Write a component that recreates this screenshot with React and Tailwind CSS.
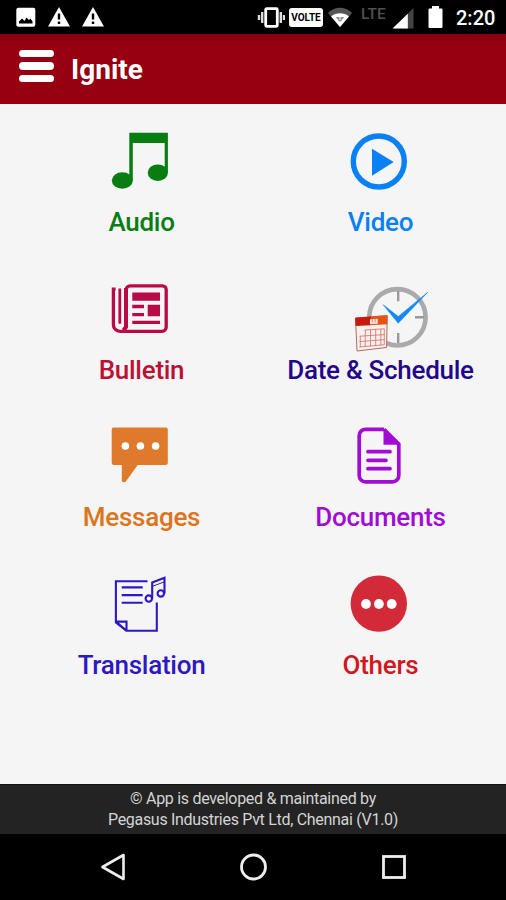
import React from 'react';

const AudioIcon = () => (
  <svg width="100" height="76" viewBox="0 0 100 76" fill="#087d12">
    <path d="M38.3 4.7h38.6V45h-3.2V15H41.8v38h-3.5z" />
    <ellipse cx="31.3" cy="52.5" rx="10.5" ry="8.2" />
    <ellipse cx="66.8" cy="44.7" rx="10.1" ry="8.3" />
  </svg>
);

const VideoIcon = () => (
  <svg width="100" height="76" viewBox="0 0 100 76">
    <circle cx="48.8" cy="33.5" r="25.5" fill="none" stroke="#0a80f5" strokeWidth="5.4" />
    <path d="M42 20.7 63.7 34 42 47.7z" fill="#0a80f5" />
  </svg>
);

const BulletinIcon = () => (
  <svg width="100" height="76" viewBox="0 0 100 76" fill="none" stroke="#b90a48">
    <path
      d="M35.3 49V13.5a3.7 3.7 0 0 1 3.7-3.7h32.5a3.7 3.7 0 0 1 3.7 3.7v37.8a4 4 0 0 1-4 4H29a6.6 6.6 0 0 1-6.6-6.6V13.2h2.2"
      strokeWidth="3.3"
    />
    <path d="M28.8 12.5v35.2" strokeWidth="2.8" />
    <path d="M25.5 47.5a3.3 3.4 0 0 0 6.6 0" stroke="#f5f5f5" strokeWidth="1.6" />
    <path d="M35 12v39l-2.5 3.3" strokeWidth="4" />
    <path
      d="M41.3 16.4H69v8.3H41.3zM41.3 28.8H53v3.4H41.3zM41.3 36.9H53v3.4H41.3zM56.7 28.8H69v11.5H56.7zM41.3 44.8H69V48H41.3z"
      fill="#b90a48"
      stroke="none"
    />
  </svg>
);

const ScheduleIcon = () => (
  <svg width="100" height="76" viewBox="0 0 100 76">
    <circle cx="67.4" cy="41.3" r="28.2" fill="none" stroke="#aaa" strokeWidth="4.6" />
    <path d="M68.2 15v10.3M85 41.3h9M68.2 57v10" stroke="#999" strokeWidth="2.4" />
    <path d="M53.2 28.8 68.3 40.5 97.7 16.3 68.2 47.2z" fill="#118af8" stroke="#118af8" strokeWidth=".6" />
    <path d="M25.5 42 57.2 39.6 56.6 71.5 27 75z" fill="#f8f0ef" stroke="#b66a60" strokeWidth="1" />
    <path d="M25.2 41.7 41 40.5v8.7l-15.3.9z" fill="#c9190c" />
    <path d="M41 40.5l16.4-1.2-.1 9L41 49.2z" fill="#e75310" />
    <path d="M40 43.3l7.7-.5v5L40 48.2z" fill="#f4e4df" />
    <path d="M42.3 43.2v3.3M45.2 43v3.3" stroke="#c67b65" strokeWidth=".8" />
    <path
      d="M34.5 54l20-1.2M29.5 60.2l25-1.6M29.3 65.6l25-1.9M29.5 71l24.8-2.3M35.3 54l-.1 17M40.5 53.5v17M45.7 53.3v16.8M50.8 53v16.5M54.3 52.8v16M30.3 60v11"
      stroke="#d67d6e"
      strokeWidth=".9"
      fill="none"
    />
  </svg>
);

const MessagesIcon = () => (
  <svg width="100" height="76" viewBox="0 0 100 76" fill="#df7a2c">
    <path d="M22.5 4.6H75a1.8 1.8 0 0 1 1.8 1.8v33.7a1.8 1.8 0 0 1-1.8 1.8H46.7L35 58.2c-1.3 1.8-4.2 1.4-4.2-.7V41.9h-8.3a1.8 1.8 0 0 1-1.8-1.8V6.4a1.8 1.8 0 0 1 1.8-1.8z" />
    <g fill="#fff">
      <circle cx="34.4" cy="23" r="3.8" />
      <circle cx="49.4" cy="23" r="3.8" />
      <circle cx="64.6" cy="23" r="3.8" />
    </g>
  </svg>
);

const DocumentsIcon = () => (
  <svg width="100" height="76" viewBox="0 0 100 76" fill="none" stroke="#a20bd3" strokeWidth="3.7">
    <path d="M54 6.3H35.5a6.3 6.3 0 0 0-6.3 6.3v39.9a6.3 6.3 0 0 0 6.3 6.3h27a6.3 6.3 0 0 0 6.3-6.3V21L54 6.3" strokeLinejoin="round" />
    <path d="M53.5 5.5l16.8 16.2H53.5z" fill="#a20bd3" stroke="none" />
    <path d="M38 28.7h22M38 37.3h18M38 45.7h22" strokeLinecap="round" />
  </svg>
);

const TranslationIcon = () => (
  <svg width="100" height="76" viewBox="0 0 100 76" fill="none" stroke="#2d18c4" strokeWidth="2.1">
    <path d="M56.5 10.2H24.9v41.4l10.6 8.2h30.3V31.6" />
    <path d="M24.9 50.6h10.6v9.2M24.9 50.6l10.6 9.2" />
    <path d="M30.7 16.4h21M30.7 24.1h21M30.7 31.7h21" />
    <circle cx="57.8" cy="27.6" r="3.2" />
    <circle cx="69.8" cy="22.4" r="3.2" />
    <path d="M61.2 27.5V11.4l12.3-4.6v15.7" />
    <path d="M61.2 15.4l12.3-4.6" strokeWidth="1" />
  </svg>
);

const OthersIcon = () => (
  <svg width="100" height="76" viewBox="0 0 100 76">
    <circle cx="48.8" cy="32.6" r="28.2" fill="#d32a3a" />
    <g fill="#fff">
      <circle cx="36" cy="33" r="4.9" />
      <circle cx="48.9" cy="33" r="4.9" />
      <circle cx="61.7" cy="33" r="4.9" />
    </g>
  </svg>
);

const WarningIcon = () => (
  <svg width="22" height="20" viewBox="0 0 22 20">
    <path d="M11 0l11 19.5H0z" fill="#fff" />
    <path d="M11 6.5v6M11 14.5v2.5" stroke="#000" strokeWidth="2.4" />
  </svg>
);

const menuItems = [
  { label: 'Audio', color: 'text-[#087d12]', Icon: AudioIcon },
  { label: 'Video', color: 'text-[#0a80f5]', Icon: VideoIcon },
  { label: 'Bulletin', color: 'text-[#bc1034]', Icon: BulletinIcon },
  { label: 'Date & Schedule', color: 'text-[#23068a]', Icon: ScheduleIcon },
  { label: 'Messages', color: 'text-[#dc7420]', Icon: MessagesIcon },
  { label: 'Documents', color: 'text-[#a20bd3]', Icon: DocumentsIcon },
  { label: 'Translation', color: 'text-[#2d18c4]', Icon: TranslationIcon },
  { label: 'Others', color: 'text-[#cf1820]', Icon: OthersIcon },
];

const StatusBar = () => (
  <div className="h-[34px] bg-black flex items-start justify-between pl-4 pr-[11px] pt-[7px]">
    <div className="flex">
      <svg width="20" height="20" viewBox="0 0 20 20">
        <rect x=".3" y=".7" width="19" height="19" rx="2" fill="#fff" />
        <path d="M3 16.5v-2l3-3 2.5 2.5 2-3.5 2.5 2.5 1.5-1.5 2 3v2z" fill="#000" />
      </svg>
      <div className="ml-3 flex gap-3">
        <WarningIcon />
        <WarningIcon />
      </div>
    </div>
    <div className="flex">
      <svg width="28" height="21" viewBox="0 0 28 21">
        <path d="M2 8v5M5.2 5v11M27 8v5M23.8 5v11" stroke="#ddd" strokeWidth="2.4" />
        <rect x="8.7" y="1.7" width="11.6" height="17.6" rx="1" fill="none" stroke="#fff" strokeWidth="2.8" />
      </svg>
      <div className="ml-[4px] mt-[1px] w-[34px] h-[19px] rounded-[3px] bg-white text-black text-[10px] leading-[19px] font-bold text-center">
        VOLTE
      </div>
      <svg className="ml-[5px]" width="24" height="21" viewBox="0 0 24 21">
        <path d="M0 6C7-1 17-1 24 6L12 20z" fill="#555" />
        <path d="M3 9.5c5-4.3 13-4.3 18 0L12 20z" fill="#fff" />
        <path d="M8 10.5h8L12 15z" fill="#222" />
        <path d="M12 9v6M8 12h8" stroke="#fff" strokeWidth="1" />
      </svg>
      <span className="ml-[9px] w-[26px] text-[#505050] text-[15.5px] leading-[14px] font-medium">LTE</span>
      <svg className="ml-[5px]" width="22" height="22" viewBox="0 0 22 22">
        <path d="M21.5 1v20.5H1z" fill="#444" />
        <path d="M15.8 6.7v14.8H.5z" fill="#fff" />
      </svg>
      <svg className="ml-[14px] -mt-[1px]" width="15" height="23" viewBox="0 0 15 23">
        <path d="M4 0h7v2.5h2.5q1 0 1 1V21q0 1-1 1h-12q-1 0-1-1V3.5q0-1 1-1H4z" fill="#fff" />
      </svg>
      <span className="ml-[13px] w-[39px] whitespace-nowrap text-white text-[20px] leading-[22px] font-medium">2:20</span>
    </div>
  </div>
);

const Header = () => (
  <header className="h-[70px] bg-[#970011] bg-linear-to-b from-[#86000d] via-[#970011] via-15% to-[#970011] flex items-start pl-[19px] pt-4">
    <button className="flex flex-col gap-[5px] w-[35px]" aria-label="Menu">
      <span className="h-[7.4px] w-full rounded-full bg-white"></span>
      <span className="h-[7.4px] w-full rounded-full bg-white"></span>
      <span className="h-[7.4px] w-full rounded-full bg-white"></span>
    </button>
    <h1 className="ml-[17px] mt-px text-white text-[28px] leading-[38px] font-bold">Ignite</h1>
  </header>
);

const App = () => {
  return (
    <div className="w-full h-[900px] flex flex-col overflow-hidden bg-[#f5f5f5] font-['Roboto',sans-serif]">
      <StatusBar />
      <Header />
      <main className="flex-1 grid grid-cols-2 content-start gap-y-[35.67px] pt-6 pl-[22px] pr-[6px]">
        {menuItems.map(({ label, color, Icon }) => (
          <button key={label} className="flex flex-col items-center">
            <div className="pr-[2px]">
              <Icon />
            </div>
            <span className={`text-[26px] leading-9 tracking-[-0.27px] font-medium whitespace-nowrap ${color}`}>
              {label}
            </span>
          </button>
        ))}
      </main>
      <footer className="h-[50px] bg-[#232323] border-t border-[#111] pt-[3px] text-center text-[#d4d4d4] text-[16px] leading-[21px] tracking-[-0.3px]">
        <p>© App is developed &amp; maintained by</p>
        <p>Pegasus Industries Pvt Ltd, Chennai (V1.0)</p>
      </footer>
      <nav className="h-[66px] bg-black flex items-center justify-between pl-[99px] pr-[98px]">
        <svg width="27" height="30" viewBox="0 0 27 30" fill="none" stroke="#eee" strokeWidth="2.6">
          <path d="M24.5 3v24L3.5 15z" strokeLinejoin="round" />
        </svg>
        <svg width="30" height="30" viewBox="0 0 30 30" fill="none" stroke="#eee" strokeWidth="2.8">
          <circle cx="15.5" cy="15" r="12" />
        </svg>
        <svg width="28" height="28" viewBox="0 0 28 28" fill="none" stroke="#eee" strokeWidth="2.8">
          <rect x="3.5" y="3.5" width="21" height="21" />
        </svg>
      </nav>
    </div>
  );
};

export default App;
